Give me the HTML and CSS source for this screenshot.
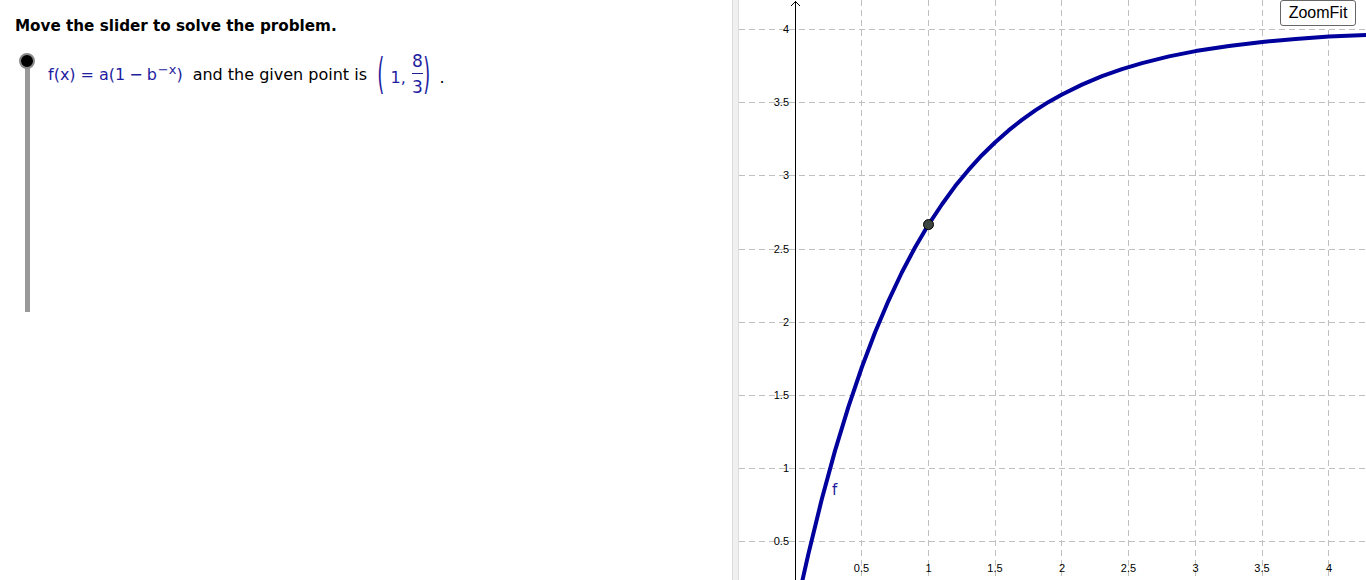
FILE: index.html
```html
<!DOCTYPE html>
<html>
<head>
<meta charset="utf-8">
<link rel="stylesheet" href="styles.css">
</head>
<body>
<div class="app">
  <div class="left">
    <div class="title">Move the slider to solve the problem.</div>
    <div class="row">
      <div class="slider">
        <div class="track"></div>
        <div class="knob"></div>
      </div>
      <div class="formula">
        <span class="m">f(x)<span class="eq">=</span>a(1<span class="minus">−</span>b<sup>−x</sup>)</span>
        <span class="txt">and the given point is</span>
        <span class="pt m">
          <span class="paren">(</span>
          <span class="one">1,</span>
          <span class="frac"><span class="num">8</span><span class="bar"></span><span class="den">3</span></span>
          <span class="paren">)</span>
        </span>
        <span class="dot">.</span>
      </div>
    </div>
  </div>
  <div class="divider"></div>
  <div class="graph">
    <svg class="plot" width="627" height="580" viewBox="0 0 627 580">
      <g class="grid">
        <line x1="0" y1="541.5" x2="627" y2="541.5"/>
        <line x1="0" y1="468.5" x2="627" y2="468.5"/>
        <line x1="0" y1="395.5" x2="627" y2="395.5"/>
        <line x1="0" y1="322.5" x2="627" y2="322.5"/>
        <line x1="0" y1="249.5" x2="627" y2="249.5"/>
        <line x1="0" y1="175.5" x2="627" y2="175.5"/>
        <line x1="0" y1="102.5" x2="627" y2="102.5"/>
        <line x1="0" y1="29.5" x2="627" y2="29.5"/>
        <line x1="122.5" y1="0" x2="122.5" y2="580"/>
        <line x1="189.5" y1="0" x2="189.5" y2="580"/>
        <line x1="256.5" y1="0" x2="256.5" y2="580"/>
        <line x1="322.5" y1="0" x2="322.5" y2="580"/>
        <line x1="389.5" y1="0" x2="389.5" y2="580"/>
        <line x1="456.5" y1="0" x2="456.5" y2="580"/>
        <line x1="523.5" y1="0" x2="523.5" y2="580"/>
        <line x1="589.5" y1="0" x2="589.5" y2="580"/>
      </g>
      <line class="axis" x1="56.5" y1="1" x2="56.5" y2="580"/>
      <polyline class="arrow" points="52,6 56.5,1.5 61,6"/>
      <g class="ylab">
        <text x="50" y="33">4</text>
        <text x="50" y="106">3.5</text>
        <text x="50" y="179">3</text>
        <text x="50" y="253">2.5</text>
        <text x="50" y="326">2</text>
        <text x="50" y="399">1.5</text>
        <text x="50" y="472">1</text>
        <text x="50" y="545">0.5</text>
      </g>
      <g class="xlab">
        <text x="122.5" y="572">0.5</text>
        <text x="189.5" y="572">1</text>
        <text x="256" y="572">1.5</text>
        <text x="323" y="572">2</text>
        <text x="389.5" y="572">2.5</text>
        <text x="456.5" y="572">3</text>
        <text x="523" y="572">3.5</text>
        <text x="590" y="572">4</text>
      </g>
      <polyline class="curve" points="61.3,589.8 69.35,554.1 82.7,499.5 96.05,450.6 109.4,406.8 122.75,367.5 136.1,332.3 149.45,300.8 162.8,272.5 176.15,247.2 189.5,224.6 202.85,204.5 216.2,186.1 229.55,169.9 242.9,155.2 256.25,142.2 269.6,130.4 282.95,119.9 296.3,110.4 309.65,101.9 323,94.5 343,84.6 363.05,76.2 383,69.1 403.1,63.1 430,56.4 456.5,51.1 490,45.9 523.25,41.9 556.6,38.9 590,36.6 656.75,33.6"/>
      <circle class="point" cx="189.5" cy="224.6" r="5"/>
      <text class="flabel" x="93" y="495">f</text>
    </svg>
    <div class="zoomfit">ZoomFit</div>
  </div>
</div>
</body>
</html>
```
FILE: styles.css
```css
html, body {
  margin: 0;
  padding: 0;
  background: #ffffff;
}
.app {
  display: flex;
  width: 1366px;
  height: 580px;
  overflow: hidden;
}
.left {
  width: 732px;
  flex: none;
  padding: 16px 0 0 15px;
  box-sizing: border-box;
  font-family: "DejaVu Sans", "Noto Sans", sans-serif;
}
.title {
  font-weight: bold;
  font-size: 15.2px;
  line-height: 20px;
  color: #000;
}
.row {
  display: flex;
  align-items: flex-start;
  margin-top: 17px;
}
.slider {
  position: relative;
  width: 16px;
  height: 260px;
  margin-left: 4px;
  display: flex;
  justify-content: center;
}
.track {
  width: 5px;
  height: 255px;
  margin-top: 4px;
  background: #999999;
}
.knob {
  position: absolute;
  left: 0;
  top: 0;
  width: 12px;
  height: 12px;
  border-radius: 50%;
  background: #000;
  border: 2px solid #8a8a8a;
}
.formula {
  display: flex;
  align-items: center;
  margin-left: 13px;
  margin-top: -4px;
  font-size: 16px;
  color: #000;
  white-space: nowrap;
}
.m {
  color: #1e1ea0;
}
.eq {
  margin: 0 5px 0 5px;
}
.minus {
  margin: 0 4px 0 4px;
}
.m sup {
  font-size: 13px;
  vertical-align: 6px;
  line-height: 0;
  margin-left: 1px;
}
.txt {
  margin-left: 10px;
}
.pt {
  display: inline-flex;
  align-items: center;
  margin-left: 11px;
}
.paren {
  display: inline-block;
  font-size: 40px;
  font-weight: normal;
  line-height: 50px;
  transform: scale(0.45, 1.05);
  margin: 0 -5px;
}
.one {
  margin: 0 6px 0 7px;
  position: relative;
  top: 3px;
}
.frac {
  display: inline-flex;
  flex-direction: column;
  align-items: center;
  font-size: 17px;
  line-height: 18px;
  margin-right: 1px;
}
.bar {
  width: 11px;
  height: 1px;
  background: #1e1ea0;
  margin: 3px 0 4px;
}
.dot {
  margin-left: 10px;
  position: relative;
  top: 3px;
}
.divider {
  width: 7px;
  flex: none;
  background: #f0f0f0;
  border-left: 1px solid #dcdcdc;
  border-right: 1px solid #dcdcdc;
  box-sizing: border-box;
}
.graph {
  position: relative;
  flex: 1;
  overflow: hidden;
}
.plot {
  display: block;
}
.grid line {
  stroke: #c0c0c0;
  stroke-width: 1;
  stroke-dasharray: 6 4;
  shape-rendering: crispEdges;
}
.axis {
  stroke: #000;
  stroke-width: 1;
  shape-rendering: crispEdges;
}
.arrow {
  fill: none;
  stroke: #000;
  stroke-width: 1;
}
.ylab text, .xlab text {
  font-family: "Liberation Sans", Arial, sans-serif;
  font-size: 11px;
  fill: #000;
}
.ylab text {
  text-anchor: end;
}
.xlab text {
  text-anchor: middle;
}
.curve {
  fill: none;
  stroke: #00009c;
  stroke-width: 4;
  stroke-linejoin: round;
}
.point {
  fill: #3d4540;
  stroke: #000;
  stroke-width: 1;
}
.flabel {
  font-family: "DejaVu Sans", sans-serif;
  font-size: 15px;
  fill: #1e1ea0;
}
.zoomfit {
  position: absolute;
  top: 0;
  left: 541px;
  width: 74px;
  height: 24px;
  border: 1px solid #666;
  border-radius: 3px;
  background: #fff;
  font-family: "Liberation Sans", Arial, sans-serif;
  font-size: 16px;
  line-height: 24px;
  text-align: center;
  color: #000;
}
```
